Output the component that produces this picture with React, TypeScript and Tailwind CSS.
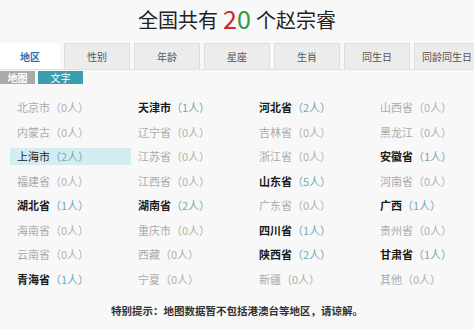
import React from "react";

const data: [string, number][] = [
  ["北京市", 0], ["天津市", 1], ["河北省", 2], ["山西省", 0],
  ["内蒙古", 0], ["辽宁省", 0], ["吉林省", 0], ["黑龙江", 0],
  ["上海市", 2], ["江苏省", 0], ["浙江省", 0], ["安徽省", 1],
  ["福建省", 0], ["江西省", 0], ["山东省", 5], ["河南省", 0],
  ["湖北省", 1], ["湖南省", 2], ["广东省", 0], ["广西", 1],
  ["海南省", 0], ["重庆市", 0], ["四川省", 1], ["贵州省", 0],
  ["云南省", 0], ["西藏", 0], ["陕西省", 2], ["甘肃省", 1],
  ["青海省", 1], ["宁夏", 0], ["新疆", 0], ["其他", 0],
];

const tabs = ["性别", "年龄", "星座", "生肖", "同生日", "同龄同生日"];

export default function App() {
  return (
    <div
      className="w-[474px] h-[329px] overflow-hidden bg-[#f8f8f8]"
      style={{ fontFamily: '"Noto Sans CJK SC", "Noto Sans", sans-serif' }}
    >
      <div className="h-[43px] flex items-center justify-center text-[20px] text-[#222] pb-[4px]">
        <span>全国共有</span>
        <span className="text-[25px] leading-none mx-[5px] -mt-[2px]">
          <span className="text-[#d3232a]">2</span>
          <span className="text-[#2e9a3a]">0</span>
        </span>
        <span>个赵宗睿</span>
      </div>
      <div className="flex h-[27px] gap-[4px] border-b border-[#e2e2e2] whitespace-nowrap">
        <div className="w-[60px] shrink-0 bg-white flex items-center justify-center text-[10px] font-bold text-[#2c6fb5]">
          地区
        </div>
        {tabs.map((t) => (
          <div
            key={t}
            className="w-[66px] shrink-0 bg-[#ececec] border border-b-0 border-[#dedede] flex items-center justify-center text-[10px] text-[#555]"
          >
            {t}
          </div>
        ))}
      </div>
      <div className="flex gap-[3px] mt-[1px] h-[13px]">
        <div className="w-[35px] bg-[#aaaaaa] text-white text-[10px] leading-[13px] flex items-center justify-center font-bold">
          地图
        </div>
        <div className="w-[45px] bg-[#3b9eae] text-white text-[10px] leading-[13px] flex items-center justify-center">
          文字
        </div>
      </div>
      <div className="grid grid-cols-[121px_121px_121px_101px] ml-[10px] mt-[11px]">
        {data.map(([name, n]) => {
          const active = n > 0;
          const hl = name === "上海市";
          return (
            <div key={name} className="h-[24.5px] flex items-center whitespace-nowrap">
              <div
                className={`h-[17px] w-full flex items-center pl-[7px] text-[11px] ${hl ? "bg-[#d4edf3]" : ""}`}
              >
                <span
                  className={
                    active
                      ? hl
                        ? "text-[#222]"
                        : "text-[#1a1a1a] font-bold"
                      : "text-[#ababab]"
                  }
                >
                  {name}
                </span>
                <span className={active ? "text-[#73a8b0]" : "text-[#b0b0b0]"}>
                  （{n}人）
                </span>
              </div>
            </div>
          );
        })}
      </div>
      <div className="mt-[12px] text-center text-[10.5px] font-bold text-[#333] whitespace-nowrap">
        特别提示：地图数据暂不包括港澳台等地区，请谅解。
      </div>
    </div>
  );
}
